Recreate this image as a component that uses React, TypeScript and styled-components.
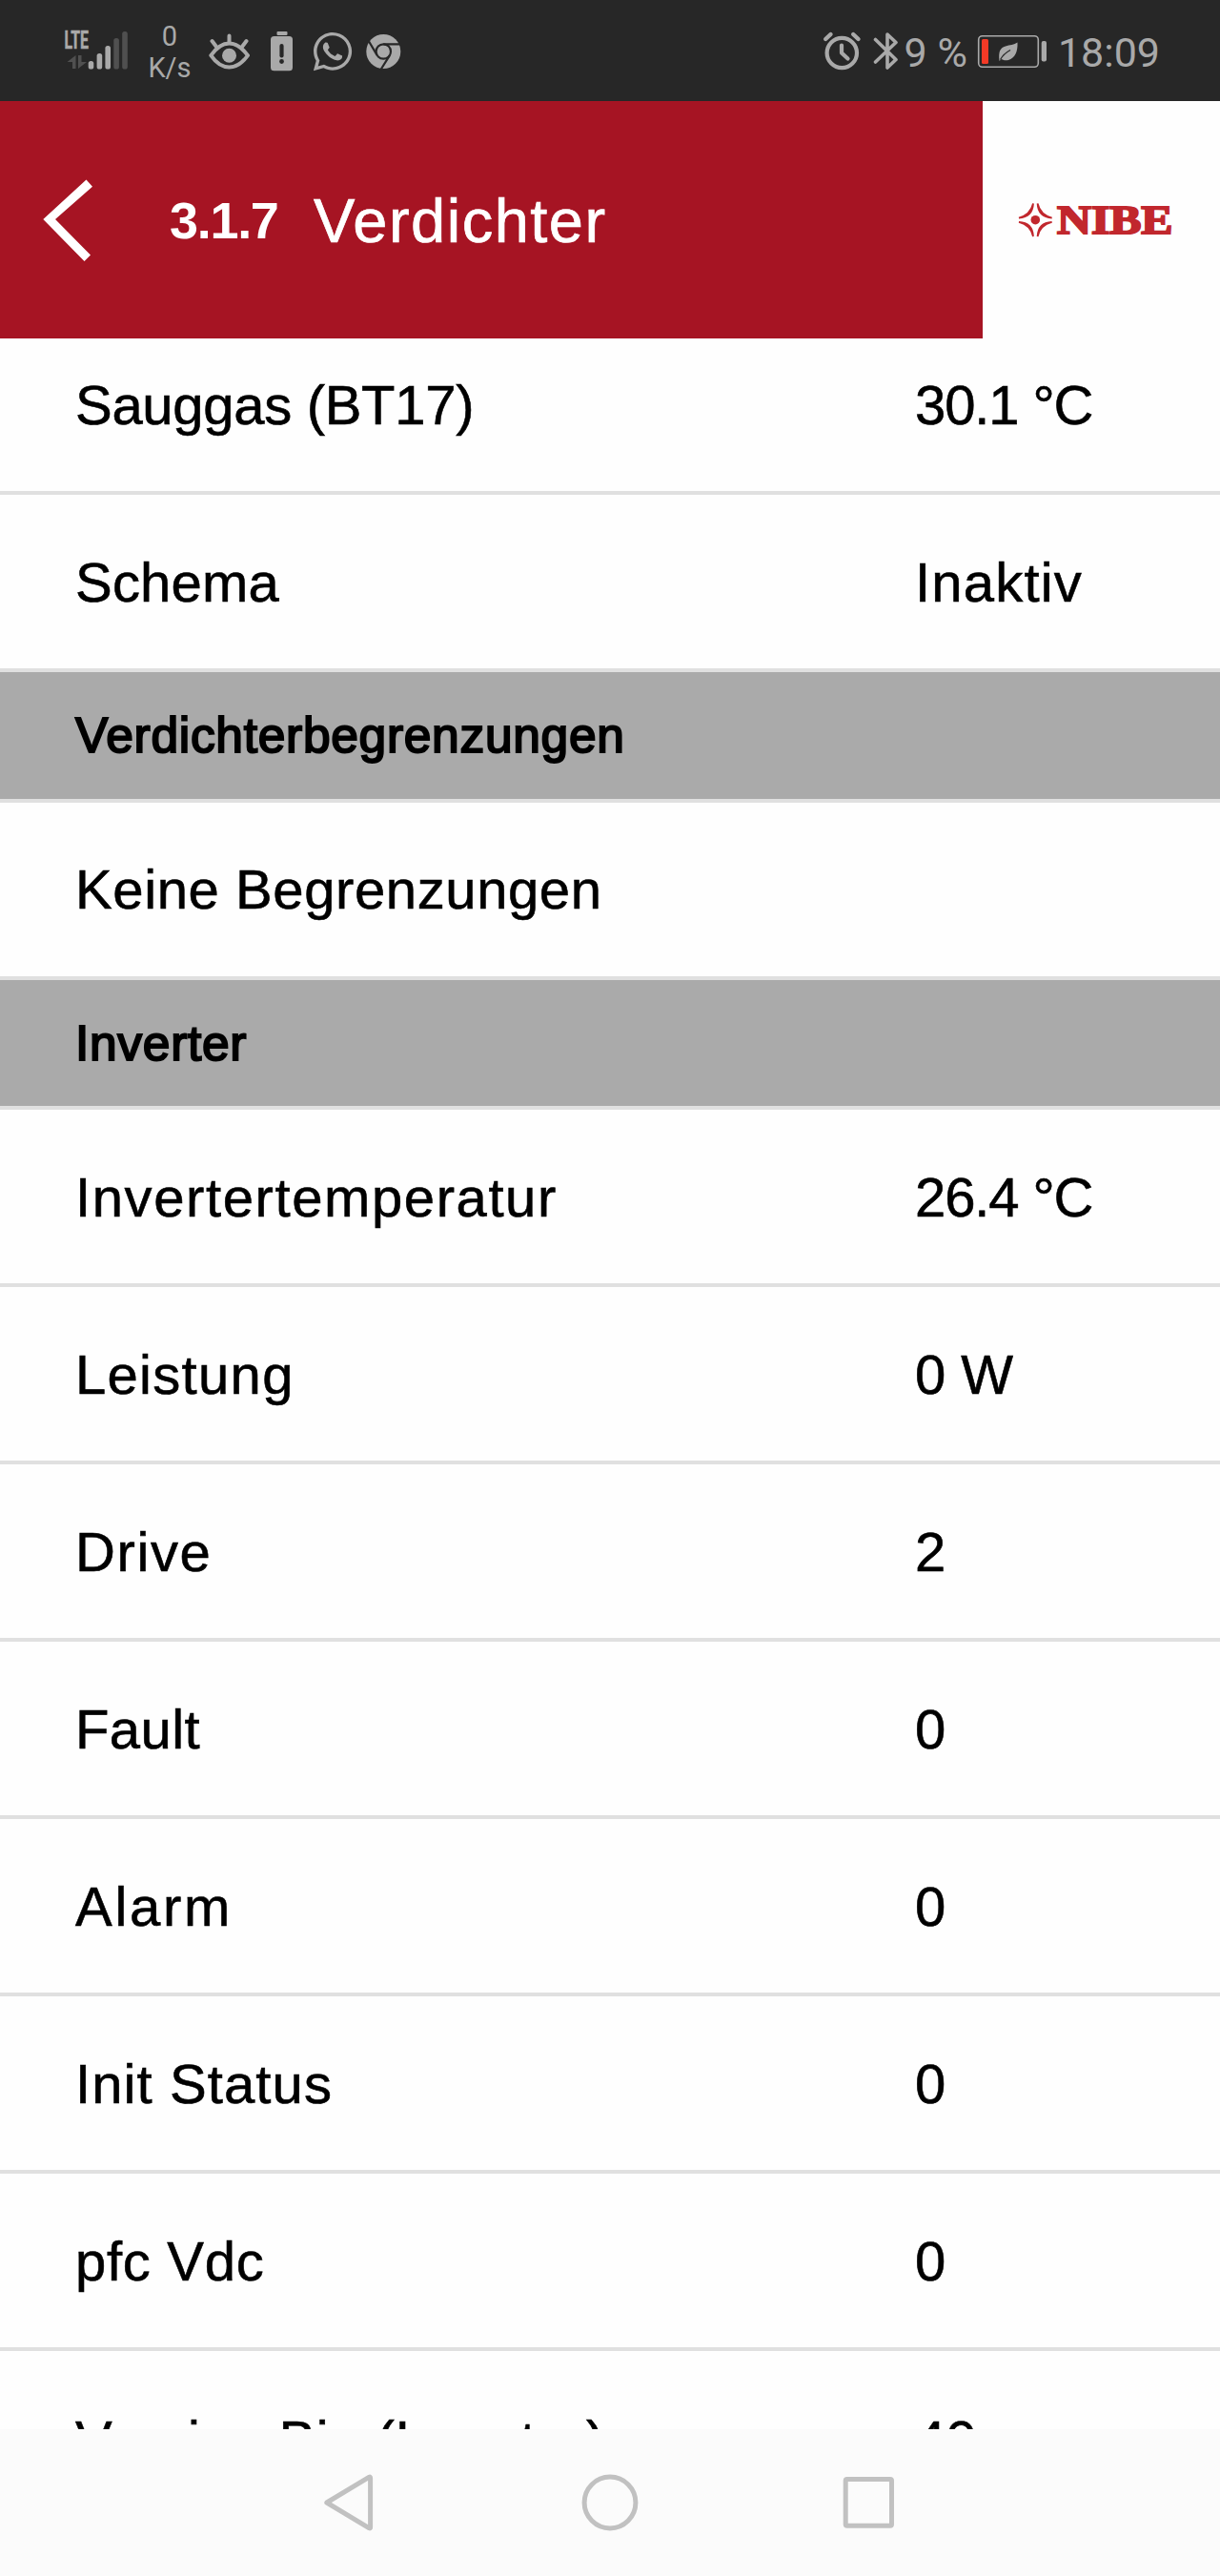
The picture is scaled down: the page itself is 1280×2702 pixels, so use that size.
import React from "react";
import styled, { createGlobalStyle } from "styled-components";
import { FaWhatsapp } from "react-icons/fa";

const INK = "#a9a9a9";
const DIM = "#505050";
const BAR = "#272727";

const GlobalStyle = createGlobalStyle`
  *, *::before, *::after { box-sizing: border-box; }
  html, body { margin: 0; padding: 0; background: #fefefe; }
`;

const Screen = styled.div`
  width: 1280px;
  height: 2702px;
  display: flex;
  flex-direction: column;
  overflow: hidden;
  background: #fefefe;
  color: #000;
  font-family: "Liberation Sans", Arial, sans-serif;
`;

const StatusBar = styled.div`
  flex: none;
  height: 106px;
  display: flex;
  justify-content: space-between;
  align-items: center;
  padding-right: 63px;
  background: ${BAR};
  color: ${INK};
  font-family: Roboto, sans-serif;
`;

const StatusGroup = styled.div`
  height: 106px;
  display: flex;
  align-items: center;
`;

const Glyph = styled.svg<{ $gap?: number }>`
  display: block;
  flex: none;
  margin-left: ${(p) => p.$gap ?? 0}px;
`;

const Speed = styled.div`
  width: 50px;
  margin: 0 4px 0 12px;
  padding-top: 3px;
  text-align: center;
  font-size: 29px;
  line-height: 33px;
`;

const WhatsAppSlot = styled.span`
  display: flex;
  margin-left: 18px;
  padding-top: 2px;
`;

const StatusText = styled.span<{ $left: number }>`
  margin-left: ${(p) => p.$left}px;
  padding-top: 3px;
  font-size: 43px;
  line-height: 50px;
  white-space: pre;
`;

const Header = styled.header`
  flex: none;
  height: 249px;
  display: flex;
`;

const HeaderTitle = styled.div`
  width: 1031px;
  display: flex;
  align-items: center;
  background: #a61423;
  color: #fff;
`;

const MenuNumber = styled.span`
  width: 151px;
  margin-left: 79px;
  padding-top: 1px;
  font-size: 54px;
  font-weight: 700;
  letter-spacing: -1.3px;
`;

const Title = styled.h1`
  margin: 0;
  padding-top: 1px;
  font-size: 65px;
  font-weight: 400;
  letter-spacing: 1.5px;
  -webkit-text-stroke: 0.7px #fff;
`;

const Brand = styled.div`
  flex: 1;
  display: flex;
  align-items: center;
  padding-left: 37px;
`;

const Viewport = styled.main`
  height: 2193px;
  overflow: hidden;
`;

const List = styled.div`
  margin-top: -22px;
`;

const Row = styled.div`
  height: 186px;
  display: flex;
  align-items: center;
  padding-left: 79px;
  border-bottom: 4px solid #e0e0e0;
  font-size: 58px;
  white-space: pre;
  -webkit-text-stroke: 0.6px #000;

  &:last-child {
    padding-top: 4px;
  }
`;

const Label = styled.span<{ $spacing?: number }>`
  width: 881px;
  letter-spacing: ${(p) => p.$spacing ?? 0}px;
`;

const Value = styled.span<{ $spacing?: number }>`
  letter-spacing: ${(p) => p.$spacing ?? 0}px;
`;

const Section = styled.div`
  height: 136.5px;
  display: flex;
  align-items: center;
  padding-left: 79px;
  background: #aaaaaa;
  border-bottom: 4px solid #e0e0e0;
  font-size: 51.5px;
  -webkit-text-stroke: 2px #000;
  letter-spacing: 0.7px;
`;

const NavBar = styled.nav`
  flex: 1;
  display: flex;
  align-items: center;
  background: #fbfbfb;
`;

function Signal() {
  return (
    <Glyph $gap={64} width="77" height="106" viewBox="64 0 77 106">
      <text x="67.500" y="51" fontFamily="Roboto, sans-serif" fontWeight="700" fontSize="25" textLength="25.500" lengthAdjust="spacingAndGlyphs" fill={INK} stroke={INK} strokeWidth="0.600">LTE</text>
      <g fill={INK}>
        <rect x="92.700" y="64" width="5.600" height="8.500" rx="2.600" />
        <rect x="101.600" y="56" width="5.600" height="16.500" rx="2.600" />
        <rect x="110.400" y="48" width="5.600" height="24.500" rx="2.600" />
      </g>
      <g fill={DIM}>
        <rect x="119.300" y="40" width="5.600" height="32.500" rx="2.600" />
        <rect x="128.200" y="33" width="5.600" height="39.500" rx="2.600" />
        <path d="M79.500 58v14h-3.500v-7h-5.500z" />
        <path d="M82 58h3.500v7h5.500L82 72z" />
      </g>
    </Glyph>
  );
}

function Eye() {
  return (
    <Glyph $gap={11} width="46" height="106" viewBox="218 0 46 106">
      <g fill="none" stroke={INK} strokeWidth="4" strokeLinecap="round" strokeLinejoin="round">
        <path d="M221.300 58.200C227 50 233 45.500 240.500 45.500S254 50 260 58.200C254 66.500 248 70.500 240.500 70.500S227 66.500 221.300 58.200Z" />
        <path d="M240.500 37.500V45M222.500 43L227 49M258.500 43L254 49" />
      </g>
      <circle cx="240.500" cy="58.200" r="7.500" fill={INK} />
    </Glyph>
  );
}

function BatteryAlert() {
  return (
    <Glyph $gap={19} width="25" height="106" viewBox="283 0 25 106">
      <rect x="290.500" y="33" width="11" height="4" rx="1" fill={INK} />
      <rect x="284" y="38" width="23" height="36.300" rx="3.500" fill={INK} />
      <path d="M295.500 48V58.500" stroke={BAR} strokeWidth="4.200" strokeLinecap="round" />
      <circle cx="295.500" cy="64.500" r="2.400" fill={BAR} />
    </Glyph>
  );
}

function Chrome() {
  return (
    <Glyph $gap={11} width="38" height="106" viewBox="383 0 38 106">
      <circle cx="402.300" cy="54" r="18" fill={INK} />
      <circle cx="402.300" cy="54" r="7.700" fill={INK} stroke={BAR} strokeWidth="2.200" />
      <path d="M402.300 46.300H420M395.600 57.900L386.500 42.500M409 57.900L399.500 73" stroke={BAR} strokeWidth="2.200" fill="none" />
    </Glyph>
  );
}

function Alarm() {
  return (
    <Glyph width="41" height="106" viewBox="863 0 41 106">
      <g fill="none" stroke={INK} strokeLinecap="round" strokeLinejoin="round">
        <circle cx="883.300" cy="55.500" r="15.700" strokeWidth="4.200" />
        <path d="M883 47.500V55.500L889.500 61.500" strokeWidth="4.200" />
        <path d="M866.200 41L871.500 36M900.500 41L895.200 36" strokeWidth="4.400" />
      </g>
    </Glyph>
  );
}

function Bluetooth() {
  return (
    <Glyph $gap={12} width="28" height="106" viewBox="916 0 28 106">
      <path d="M918.500 41.500L940 62.500L931 71V36L940 44.500L918.500 65" fill="none" stroke={INK} strokeWidth="3.600" strokeLinecap="round" strokeLinejoin="round" />
    </Glyph>
  );
}

function Battery() {
  return (
    <Glyph $gap={10} width="75" height="106" viewBox="1025 0 75 106">
      <rect x="1026.700" y="37.700" width="62.600" height="32.600" rx="4" fill="none" stroke={INK} strokeWidth="1.600" />
      <rect x="1030" y="41" width="7" height="26" rx="1.500" fill="#f43a26" />
      <rect x="1092.700" y="43" width="5.300" height="21.500" rx="2" fill={INK} />
      <path d="M1067.500 44.500C1068 54 1065 61 1058 63C1054.500 64 1051.500 62.500 1050.500 62L1048.500 64C1047.500 54 1049 50.500 1055 48.500C1059.500 47 1064 47 1067.500 44.500Z" fill={INK} />
      <path d="M1049.500 62.500C1052 58 1055.500 55 1060 52.500" stroke={BAR} strokeWidth="1.200" fill="none" />
    </Glyph>
  );
}

function BackChevron() {
  return (
    <Glyph $gap={43} width="56" height="90" viewBox="43 185.500 56 90">
      <path d="M90.500 188L97 195.300L58 229.600L95 267L88.500 273.500L45.300 229.600Z" fill="#fff" />
    </Glyph>
  );
}

function NibeLogo() {
  return (
    <Glyph width="172" height="70" viewBox="1068 195 172 70">
      <g fill="#c1272d">
        <circle cx="1086.300" cy="229.700" r="4.800" />
        <path d="M1084 212.500C1083.500 222 1078.500 227 1069 227.500C1077 225.500 1082 221 1084 212.500Z" stroke="#c1272d" strokeWidth="1.800" />
        <path d="M1088.600 212.500C1089.100 222 1094.100 227 1103.600 227.500C1095.600 225.500 1090.600 221 1088.600 212.500Z" stroke="#c1272d" strokeWidth="1.800" />
        <path d="M1084 247C1083.500 237.500 1078.500 232.500 1069 232C1077 234 1082 238.500 1084 247Z" stroke="#c1272d" strokeWidth="1.800" />
        <path d="M1088.600 247C1089.100 237.500 1094.100 232.500 1103.600 232C1095.600 234 1090.600 238.500 1088.600 247Z" stroke="#c1272d" strokeWidth="1.800" />
        <text x="1109" y="244" fontFamily="Liberation Serif, Times New Roman, serif" fontWeight="700" fontSize="43" textLength="121.500" lengthAdjust="spacingAndGlyphs" stroke="#c1272d" strokeWidth="2">NIBE</text>
      </g>
    </Glyph>
  );
}

type Item =
  | { kind: "section"; label: string }
  | { kind: "row"; label: string; spacing: number; value?: string; valueSpacing?: number };

const items: Item[] = [
  { kind: "row", label: "Sauggas (BT17)", spacing: -0.3, value: "30.1 °C", valueSpacing: -1.1 },
  { kind: "row", label: "Schema", spacing: 0.2, value: "Inaktiv", valueSpacing: 1.2 },
  { kind: "section", label: "Verdichterbegrenzungen" },
  { kind: "row", label: "Keine Begrenzungen", spacing: 0.6 },
  { kind: "section", label: "Inverter" },
  { kind: "row", label: "Invertertemperatur", spacing: 1.6, value: "26.4 °C", valueSpacing: -1.1 },
  { kind: "row", label: "Leistung", spacing: 1.3, value: "0 W" },
  { kind: "row", label: "Drive", spacing: 1.6, value: "2" },
  { kind: "row", label: "Fault", spacing: 0.4, value: "0" },
  { kind: "row", label: "Alarm", spacing: 2.7, value: "0" },
  { kind: "row", label: "Init Status", spacing: 1.1, value: "0" },
  { kind: "row", label: "pfc Vdc", spacing: 0.7, value: "0" },
  { kind: "row", label: "Version Bio (Inverter)", spacing: 0.5, value: "40" },
];

export default function App() {
  return (
    <Screen>
      <GlobalStyle />
      <StatusBar>
        <StatusGroup>
          <Signal />
          <Speed>
            <div>0</div>
            <div>K/s</div>
          </Speed>
          <Eye />
          <BatteryAlert />
          <WhatsAppSlot>
            <FaWhatsapp size={46} />
          </WhatsAppSlot>
          <Chrome />
        </StatusGroup>
        <StatusGroup>
          <Alarm />
          <Bluetooth />
          <StatusText $left={5}>9 %</StatusText>
          <Battery />
          <StatusText $left={10}>18:09</StatusText>
        </StatusGroup>
      </StatusBar>
      <Header>
        <HeaderTitle>
          <BackChevron />
          <MenuNumber>3.1.7</MenuNumber>
          <Title>Verdichter</Title>
        </HeaderTitle>
        <Brand>
          <NibeLogo />
        </Brand>
      </Header>
      <Viewport>
        <List>
          {items.map((item) =>
            item.kind === "section" ? (
              <Section key={item.label}>{item.label}</Section>
            ) : (
              <Row key={item.label}>
                <Label $spacing={item.spacing}>{item.label}</Label>
                {item.value && <Value $spacing={item.valueSpacing}>{item.value}</Value>}
              </Row>
            )
          )}
        </List>
      </Viewport>
      <NavBar>
        <Glyph $gap={336} width="60" height="66" viewBox="336 2592 60 66">
          <path d="M342.800 2625L387.500 2598.200Q388.600 2597.700 388.600 2599V2651Q388.600 2652.300 387.500 2651.800Z" fill="none" stroke="#c1c1c1" strokeWidth="5" strokeLinejoin="round" />
        </Glyph>
        <Glyph $gap={211} width="66" height="66" viewBox="607 2592 66 66">
          <circle cx="640" cy="2625" r="26.900" fill="none" stroke="#c1c1c1" strokeWidth="5" />
        </Glyph>
        <Glyph $gap={208} width="60" height="66" viewBox="881 2592 60 66">
          <rect x="887.200" y="2600.500" width="48.300" height="48.800" rx="1.500" fill="none" stroke="#c1c1c1" strokeWidth="5" />
        </Glyph>
      </NavBar>
    </Screen>
  );
}
